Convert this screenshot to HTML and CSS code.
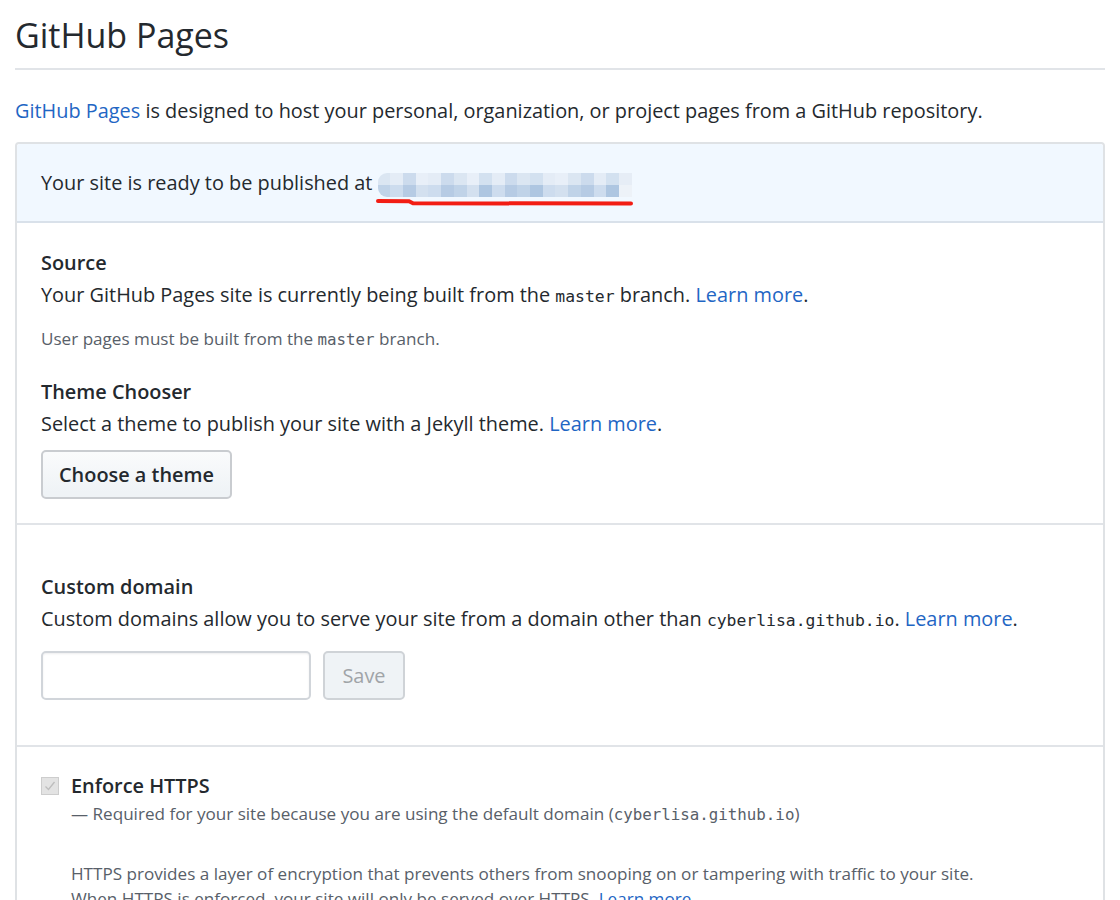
FILE: index.html
```html
<!DOCTYPE html>
<html lang="en">
<head>
<meta charset="utf-8">
<title>GitHub Pages</title>
<link rel="stylesheet" href="styles.css">
</head>
<body>
<main class="page">
  <h2 class="title">GitHub Pages</h2>
  <p class="intro"><a href="#" class="link">GitHub Pages</a> is designed to host your personal, organization, or project pages from a GitHub repository.</p>

  <div class="box">
    <div class="flash">
      Your site is ready to be published at
      <span class="blur">
        <span class="px p1"></span><span class="px p2"></span><span class="px p3"></span><span class="px p4"></span><span class="px p2"></span><span class="px p3"></span><span class="px p1"></span><span class="px p4"></span><span class="px p5"></span><span class="px p2"></span><span class="px p3"></span><span class="px p1"></span><span class="px p5"></span><span class="px p2"></span><span class="px p4"></span><span class="px p1"></span><span class="px p3"></span><span class="px p2"></span><span class="px p5"></span><span class="px p6"></span>
        <svg class="scribble" width="262" height="10" viewBox="0 0 262 10"><path d="M3 3 L34 3.2 L38 5.2 L256 5.6" fill="none" stroke="#f21d14" stroke-width="4" stroke-linecap="round"/></svg>
      </span>
    </div>

    <section class="section first">
      <h3 class="sec-title">Source</h3>
      <p class="sec-text">Your GitHub Pages site is currently being built from the <code>master</code> branch. <a href="#" class="link">Learn more</a>.</p>
      <p class="note">User pages must be built from the <code>master</code> branch.</p>

      <h3 class="sec-title theme">Theme Chooser</h3>
      <p class="sec-text">Select a theme to publish your site with a Jekyll theme. <a href="#" class="link">Learn more</a>.</p>
      <button class="btn" type="button">Choose a theme</button>
    </section>

    <section class="section domain">
      <h3 class="sec-title">Custom domain</h3>
      <p class="sec-text">Custom domains allow you to serve your site from a domain other than <code>cyberlisa.github.io</code>. <a href="#" class="link">Learn more</a>.</p>
      <form class="domain-form">
        <input class="input" type="text" aria-label="Custom domain">
        <button class="btn disabled" type="button" disabled>Save</button>
      </form>
    </section>

    <section class="section https">
      <div class="check-row">
        <span class="checkbox">
          <svg width="14" height="14" viewBox="0 0 14 14"><path d="M2.5 7.5 L5.5 10.5 L11.5 3" fill="none" stroke="#bdbdbd" stroke-width="1.3"/></svg>
        </span>
        <span class="check-label">Enforce HTTPS</span>
      </div>
      <div class="check-body">
        <p class="note req">— Required for your site because you are using the default domain (<code>cyberlisa.github.io</code>)</p>
        <p class="note info">HTTPS provides a layer of encryption that prevents others from snooping on or tampering with traffic to your site.<br>When HTTPS is enforced, your site will only be served over HTTPS. <a href="#" class="link">Learn more</a>.</p>
      </div>
    </section>
  </div>
</main>
</body>
</html>
```

FILE: styles.css
```css
* { box-sizing: border-box; }

html, body {
  margin: 0;
  padding: 0;
  background: #fff;
}

body {
  font-family: "Open Sans", "Noto Sans", sans-serif;
  color: #24292e;
  font-size: 19.9px;
  line-height: 29px;
}

.page {
  padding: 0 15px;
}

.title {
  margin: 0;
  padding: 14px 0 12px;
  font-size: 34px;
  font-weight: 400;
  line-height: 42px;
  border-bottom: 2px solid #e1e4e8;
}

.intro {
  margin: 26px 0 17px;
}

.link {
  color: #1f66c4;
  text-decoration: none;
}

code {
  font-family: "DejaVu Sans Mono", "Liberation Mono", monospace;
  font-size: 16.4px;
}

.box {
  border: 2px solid #dfe2e5;
  border-radius: 4px;
}

.flash {
  padding: 24px 24px;
  height: 79px;
  background: #f1f8ff;
  border-bottom: 2px solid #d9e1ea;
  border-radius: 3px 3px 0 0;
}

.blur {
  position: relative;
  display: inline-flex;
  width: 254px;
  height: 24px;
  vertical-align: middle;
  margin-left: 0;
}

.px {
  flex: 1;
  height: 24px;
}
.px:first-child { border-radius: 9px 0 0 9px; }
.px.p1 { background: linear-gradient(#dbe6f2 50%, #c0d3e8 50%); }
.px.p2 { background: linear-gradient(#e4ecf6 50%, #cddcee 50%); }
.px.p3 { background: linear-gradient(#ccdbed 50%, #b6cbe4 50%); }
.px.p4 { background: linear-gradient(#e8eff8 50%, #d3e0ef 50%); }
.px.p5 { background: linear-gradient(#d3e1f0 50%, #aec6e1 50%); }
.px.p6 { background: linear-gradient(#e6edf6 50%, #edf2f8 50%); }

.scribble {
  position: absolute;
  left: -3px;
  top: 25px;
}

.section {
  padding: 25px 24px 24px;
  border-bottom: 2px solid #e1e4e8;
}

.section:last-child {
  border-bottom: 0;
}

.sec-title {
  margin: 0;
  font-size: 19.9px;
  font-weight: 600;
  line-height: 29px;
}

.sec-title.theme {
  margin-top: 25px;
}

.sec-text {
  margin: 3px 0 0;
}

.note {
  margin: 15px 0 0;
  font-size: 17.1px;
  line-height: 25px;
  color: #586069;
}

.note code {
  font-size: 15.8px;
}

.btn {
  display: inline-block;
  margin-top: 12px;
  height: 49px;
  padding: 0 16px;
  font-family: inherit;
  font-size: 19.9px;
  font-weight: 600;
  color: #24292e;
  background: linear-gradient(#fafbfc, #eff3f6 90%);
  border: 2px solid #c9ccd0;
  border-radius: 5px;
}

.btn.disabled {
  margin-top: 0;
  width: 82px;
  padding: 0;
  color: #a0a4a8;
  font-weight: 400;
  background: #eff3f6;
  border-color: #cfd3d7;
}

.section.domain {
  padding-top: 47px;
  padding-bottom: 45px;
}

.domain-form {
  display: flex;
  gap: 12px;
  margin-top: 16px;
}

.input {
  width: 270px;
  height: 49px;
  border: 2px solid #d1d5da;
  border-radius: 5px;
  box-shadow: inset 0 1px 2px rgba(27,31,35,0.075);
  background: #fff;
}

.section.https {
  padding-top: 24px;
  padding-bottom: 0;
}

.check-row {
  display: flex;
  align-items: center;
  gap: 12px;
}

.checkbox {
  display: flex;
  align-items: center;
  justify-content: center;
  width: 18px;
  height: 18px;
  background: #e3e3e3;
  border: 1.5px solid #cdcdcd;
}

.check-label {
  font-size: 19.9px;
  font-weight: 600;
  line-height: 29px;
}

.check-body {
  padding-left: 30px;
}

.note.req {
  margin-top: 1px;
}

.note.info {
  margin-top: 34px;
}
```
